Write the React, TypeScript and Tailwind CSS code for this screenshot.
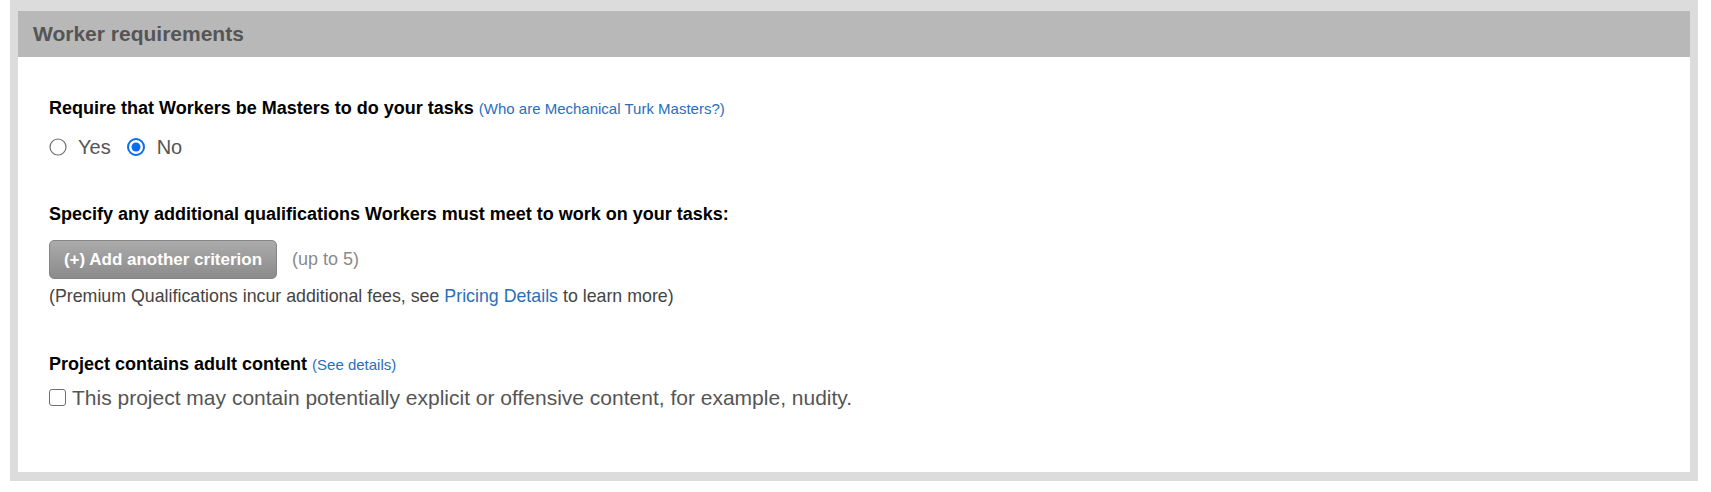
import React from "react";

const Radio: React.FC<{ checked?: boolean }> = ({ checked }) =>
  checked ? (
    <svg width="18" height="18" viewBox="0 0 18 18" className="shrink-0">
      <circle cx="9" cy="9" r="8" fill="#fff" stroke="#0a6cf5" strokeWidth="2" />
      <circle cx="9" cy="9" r="4.5" fill="#0a6cf5" />
    </svg>
  ) : (
    <svg width="18" height="18" viewBox="0 0 18 18" className="shrink-0">
      <circle cx="9" cy="9" r="8" fill="#fff" stroke="#6f6f6f" strokeWidth="1.2" />
    </svg>
  );

export default function App() {
  return (
    <div className="w-[1711px] h-[492px] bg-white font-['Liberation_Sans',Arial,sans-serif]">
      <div className="ml-[10px] w-[1688px] bg-[#dcdcdc] pt-[11px] px-[8px] pb-[9px]">
        <div className="h-[46px] bg-[#b8b8b8] pl-[15px] flex items-center text-[21px] font-bold text-[#555]">
          Worker requirements
        </div>

        <div className="bg-white pl-[31px] pt-[40px] pb-[62px]">
          <div className="text-[18px] leading-[22px] font-bold text-black">
            Require that Workers be Masters to do your tasks{" "}
            <a className="text-[15px] font-normal text-[#2a6ebb]">
              (Who are Mechanical Turk Masters?)
            </a>
          </div>
          <div className="mt-[15px] flex items-center text-[20px] leading-[24px] text-[#555]">
            <Radio />
            <span className="ml-[11px]">Yes</span>
            <span className="ml-[16px]">
              <Radio checked />
            </span>
            <span className="ml-[12px]">No</span>
          </div>

          <div className="mt-[44px] text-[18px] leading-[22px] font-bold text-black">
            Specify any additional qualifications Workers must meet to work on your tasks:
          </div>
          <div className="mt-[15px] flex items-center">
            <button className="w-[228px] h-[39px] rounded-[5px] border border-[#858585] bg-gradient-to-b from-[#ababab] to-[#8b8b8b] text-white font-bold text-[17px]">
              (+) Add another criterion
            </button>
            <span className="ml-[15px] text-[18px] text-[#8a8a8a]">(up to 5)</span>
          </div>
          <div className="mt-[7px] text-[17.8px] leading-[21px] text-[#444]">
            (Premium Qualifications incur additional fees, see{" "}
            <a className="text-[#2a6ebb]">Pricing Details</a> to learn more)
          </div>

          <div className="mt-[46px] text-[18px] leading-[22px] font-bold text-black">
            Project contains adult content{" "}
            <a className="text-[15px] font-normal text-[#2a6ebb]">(See details)</a>
          </div>
          <div className="mt-[9px] flex items-center text-[21px] leading-[25px] text-[#555]">
            <span className="w-[17px] h-[17px] rounded-[3px] border border-[#6f6f6f] bg-white shrink-0" />
            <span className="ml-[6px]">
              This project may contain potentially explicit or offensive content, for example, nudity.
            </span>
          </div>
        </div>
      </div>
    </div>
  );
}
